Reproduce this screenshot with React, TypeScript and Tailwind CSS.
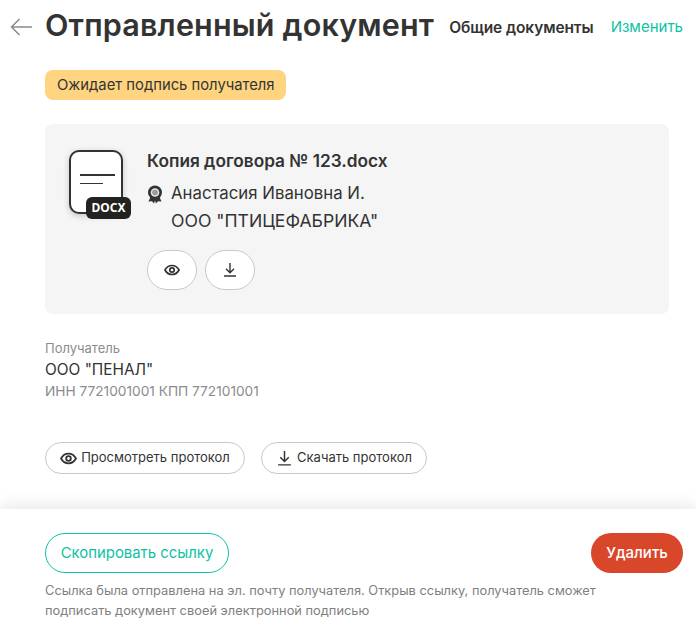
import React from "react";

const Eye = ({ s = 16 }: { s?: number }) => (
  <svg width={s} height={s} viewBox="0 0 16 16" fill="none" stroke="#333" strokeWidth="1.700">
    <path d="M1 8c1.600-3 4-4.500 7-4.500S13.400 5 15 8c-1.600 3-4 4.500-7 4.500S2.600 11 1 8Z" />
    <circle cx="8" cy="8" r="2.200" />
  </svg>
);
const Download = ({ s = 16 }: { s?: number }) => (
  <svg width={s} height={s} viewBox="0 0 16 16" fill="none" stroke="#333" strokeWidth="1.400">
    <path d="M8 1v9.500M4 6.800l4 4 4-4M2 14h12" />
  </svg>
);

export default function App() {
  return (
    <div className="w-[696px] h-[631px] overflow-hidden flex flex-col bg-white text-[#333] font-['Inter','Noto_Sans',sans-serif]">
      <div className="flex-1 min-h-0 pl-[10px] pr-[13px]">
        <header className="flex items-center h-[54px]">
          <svg width="22" height="18" viewBox="0 0 22 18" fill="none" stroke="#8a8a8a" strokeWidth="1.500" className="shrink-0 mr-[13px]">
            <path d="M22 9H1.500M9.500 1 1.500 9l8 8" />
          </svg>
          <h1 className="text-[30.500px] font-semibold leading-none whitespace-nowrap -mt-[3px] tracking-[0.17px]">Отправленный документ</h1>
          <span className="ml-auto text-[15.500px] font-semibold whitespace-nowrap mt-[2px] tracking-[-0.1px]">Общие документы</span>
          <span className="ml-[17px] text-[15px] text-[#0cc2a4] whitespace-nowrap">Изменить</span>
        </header>
        <div className="pl-[35px]">
          <div className="mt-[16px] inline-flex items-center h-[30px] px-3 rounded-lg bg-[#ffd480] text-[14.800px] text-[#333] whitespace-nowrap">Ожидает подпись получателя</div>
          <section className="mt-[24px] mr-[2px] w-[624px] h-[190px] rounded-lg bg-[#f5f5f5] flex pl-[24px] pt-[26px]">
            <div className="relative w-[78px] shrink-0">
              <div className="w-[54px] h-[64px] rounded-[10px] border-2 border-[#333] bg-white shadow-[0_2px_6px_rgba(0,0,0,0.2)] flex flex-col gap-[7px] pl-[9px] pt-[22px]">
                <div className="w-[35px] h-[1.500px] bg-[#333]"></div>
                <div className="w-[23px] h-[1.500px] bg-[#333]"></div>
              </div>
              <span className="absolute left-[17px] top-[47px] w-[45px] h-[22px] rounded-md bg-[#222] text-white text-[12px] font-bold flex items-center justify-center font-['Noto_Sans',sans-serif]">DOCX</span>
            </div>
            <div>
              <div className="text-[17.250px] font-semibold leading-5 mt-[1px] whitespace-nowrap">Копия договора № 123.docx</div>
              <div className="flex items-center mt-[8px] h-[30px]">
                <svg width="16" height="19" viewBox="0 0 16 19" fill="none" className="mr-[8px] mt-[1px]">
                  <path d="M4 11 1.500 16.500l3.500-.300L7 18.500l1-3 1 3 2-2.300 3.500.300L12 11" fill="#333" />
                  <circle cx="8" cy="7.500" r="7" fill="#333" />
                  <circle cx="8" cy="7.500" r="4.300" fill="#e4e4e4" />
                  <circle cx="8" cy="7.500" r="2.800" fill="#9a9a9a" />
                </svg>
                <span className="text-[16.800px] whitespace-nowrap">Анастасия Ивановна И.</span>
              </div>
              <div className="pl-[24px] text-[17.600px] leading-[22px] mt-[1px] whitespace-nowrap">ООО "ПТИЦЕФАБРИКА"</div>
              <div className="flex gap-[8px] mt-[18px]">
                <button className="w-[50px] h-[40px] rounded-full border border-[#c8c8c8] bg-white flex items-center justify-center"><Eye /></button>
                <button className="w-[50px] h-[40px] rounded-full border border-[#c8c8c8] bg-white flex items-center justify-center"><Download /></button>
              </div>
            </div>
          </section>
          <div className="mt-[25px] text-[13px] leading-[18px] text-[#8c8c8c]">Получатель</div>
          <div className="text-[15.400px] leading-[20px] mt-[3px]">ООО "ПЕНАЛ"</div>
          <div className="text-[13.700px] leading-[20px] text-[#8c8c8c] mt-[1px]">ИНН 7721001001 КПП 772101001</div>
          <div className="flex gap-[16px] mt-[41px]">
            <button className="h-[32px] w-[200px] rounded-full border border-[#c8c8c8] flex items-center justify-center gap-[4px] text-[13px] whitespace-nowrap"><Eye s={17} />Просмотреть протокол</button>
            <button className="h-[32px] w-[166px] rounded-full border border-[#c8c8c8] flex items-center justify-center gap-[4px] text-[13px] whitespace-nowrap"><Download s={17} />Скачать протокол</button>
          </div>
        </div>
      </div>
      <footer className="h-[122px] shrink-0 bg-white shadow-[0_-4px_14px_rgba(0,0,0,0.09)] pl-[45px] pr-[13px] pt-[24px]">
        <div className="flex items-center justify-between">
          <button className="h-[40px] w-[184px] rounded-full border border-[#0cc2a4] text-[#0cc2a4] text-[14.900px] whitespace-nowrap">Скопировать ссылку</button>
          <button className="h-[40px] w-[92px] rounded-full bg-[#d9472b] text-white text-[15px] font-medium">Удалить</button>
        </div>
        <p className="mt-[8px] text-[12.850px] leading-[20px] text-[#808080] w-[580px]">Ссылка была отправлена на эл. почту получателя. Открыв ссылку, получатель сможет подписать документ своей электронной подписью</p>
      </footer>
    </div>
  );
}
